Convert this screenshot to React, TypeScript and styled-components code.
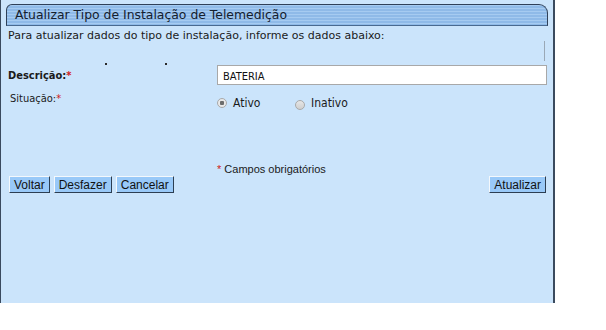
import React from 'react';
import styled, { createGlobalStyle } from 'styled-components';

const GlobalStyle = createGlobalStyle`
  html, body {
    margin: 0;
    padding: 0;
    background: #ffffff;
  }
`;

const Panel = styled.div`
  box-sizing: border-box;
  width: 555px;
  height: 303px;
  background: #cbe4fb;
  border-left: 1px solid #3a4a5e;
  border-right: 2px solid #3a4a5e;
  padding: 4px 0 0 0;
  display: flex;
  flex-direction: column;
`;

const TitleBar = styled.div`
  box-sizing: border-box;
  height: 22px;
  margin: 0 5px 0 5px;
  border: 1px solid #2f4058;
  border-bottom-color: #4a6a90;
  border-radius: 6px 9px 0 0;
  background: repeating-linear-gradient(
    to bottom,
    #a6cbf1 0px,
    #a6cbf1 1px,
    #8fbae8 1px,
    #8fbae8 3px
  );
  padding: 1px 0 0 8px;
  font-family: 'DejaVu Sans', Verdana, sans-serif;
  font-size: 12.4px;
  color: #14202e;
  line-height: 18px;
  white-space: nowrap;
`;

const Intro = styled.div`
  display: flex;
  justify-content: space-between;
  padding: 3px 8px 0 7px;
  font-family: 'DejaVu Sans', Verdana, sans-serif;
  font-size: 11px;
  color: #1a1a1a;
  line-height: 14px;
`;

const Divider = styled.div`
  width: 1px;
  height: 20px;
  margin-top: 12px;
  background: #9aa8b6;
`;

const Speck = styled.span`
  width: 2px;
  height: 2px;
  background: #2a2a2a;
`;

const SpeckRow = styled.div`
  display: flex;
  gap: 58px;
  height: 2px;
  margin-top: 2px;
  padding-left: 104px;
`;

const FormRow = styled.div<{ $top: number }>`
  display: flex;
  align-items: center;
  margin-top: ${(p) => p.$top}px;
  padding-left: 7px;
`;

const Label = styled.span<{ $bold?: boolean; $indent?: number }>`
  width: ${(p) => 209 - (p.$indent || 0)}px;
  padding-left: ${(p) => p.$indent || 0}px;
  font-family: 'DejaVu Sans Condensed', 'DejaVu Sans', Tahoma, sans-serif;
  font-size: 11px;
  font-weight: ${(p) => (p.$bold ? 'bold' : 'normal')};
  color: #1a1a1a;
`;

const Star = styled.span`
  color: #d02020;
`;

const TextInput = styled.input`
  box-sizing: border-box;
  width: 330px;
  height: 20px;
  border: 1px solid #a8a8a8;
  background: #ffffff;
  padding: 2px 4px 0 5px;
  font-family: 'DejaVu Sans Condensed', 'DejaVu Sans', Tahoma, sans-serif;
  font-size: 11px;
  color: #111;
  outline: none;
`;

const RadioGroup = styled.div`
  display: flex;
  align-items: center;
  margin-top: 9px;
`;

const RadioOption = styled.label<{ $auto?: boolean }>`
  display: flex;
  align-items: center;
  gap: 6px;
  width: ${(p) => (p.$auto ? 'auto' : '78px')};
  font-family: 'DejaVu Sans Condensed', 'DejaVu Sans', Tahoma, sans-serif;
  font-size: 12px;
  color: #1a1a1a;
`;

const RadioDot = styled.span<{ $checked?: boolean; $drop?: number }>`
  box-sizing: border-box;
  width: 10px;
  height: 10px;
  border-radius: 50%;
  border: 1px solid #a9a9a9;
  background: ${(p) =>
    p.$checked
      ? 'radial-gradient(circle, #6c6c6c 0 2px, #e8e8e8 2.5px)'
      : 'linear-gradient(#e6e6e6, #cfcfcf)'};
  transform: translateY(${(p) => p.$drop || 0}px);
`;

const Required = styled.div`
  margin-top: 53px;
  padding-left: 216px;
  font-family: 'Liberation Sans', Arial, sans-serif;
  font-size: 11px;
  color: #1a1a1a;
  line-height: 13px;
`;

const Toolbar = styled.div`
  display: flex;
  justify-content: space-between;
  margin-top: 0;
  padding: 0 7px 0 8px;
`;

const ButtonGroup = styled.div`
  display: flex;
  gap: 4px;
`;

const Button = styled.button`
  box-sizing: border-box;
  height: 17px;
  padding: 0 4px;
  border: 1px solid;
  border-color: #f4f8fc #2c3e52 #2c3e52 #f4f8fc;
  background: #99c9f8;
  font-family: 'Liberation Sans', Arial, sans-serif;
  font-size: 12px;
  line-height: 14px;
  color: #111;
  cursor: pointer;
`;

export default function App() {
  return (
    <>
      <GlobalStyle />
      <Panel>
        <TitleBar>Atualizar Tipo de Instalação de Telemedição</TitleBar>
        <Intro>
          <span>Para atualizar dados do tipo de instalação, informe os dados abaixo:</span>
          <Divider />
        </Intro>
        <SpeckRow>
          <Speck />
          <Speck />
        </SpeckRow>
        <FormRow $top={0}>
          <Label $bold>
            Descrição:<Star>*</Star>
          </Label>
          <TextInput defaultValue="BATERIA" />
        </FormRow>
        <FormRow $top={2}>
          <Label $indent={2}>
            Situação:<Star>*</Star>
          </Label>
          <RadioGroup>
            <RadioOption>
              <RadioDot $checked />
              Ativo
            </RadioOption>
            <RadioOption $auto>
              <RadioDot $drop={2} />
              Inativo
            </RadioOption>
          </RadioGroup>
        </FormRow>
        <Required>
          <Star>*</Star> Campos obrigatórios
        </Required>
        <Toolbar>
          <ButtonGroup>
            <Button>Voltar</Button>
            <Button>Desfazer</Button>
            <Button>Cancelar</Button>
          </ButtonGroup>
          <Button>Atualizar</Button>
        </Toolbar>
      </Panel>
    </>
  );
}
